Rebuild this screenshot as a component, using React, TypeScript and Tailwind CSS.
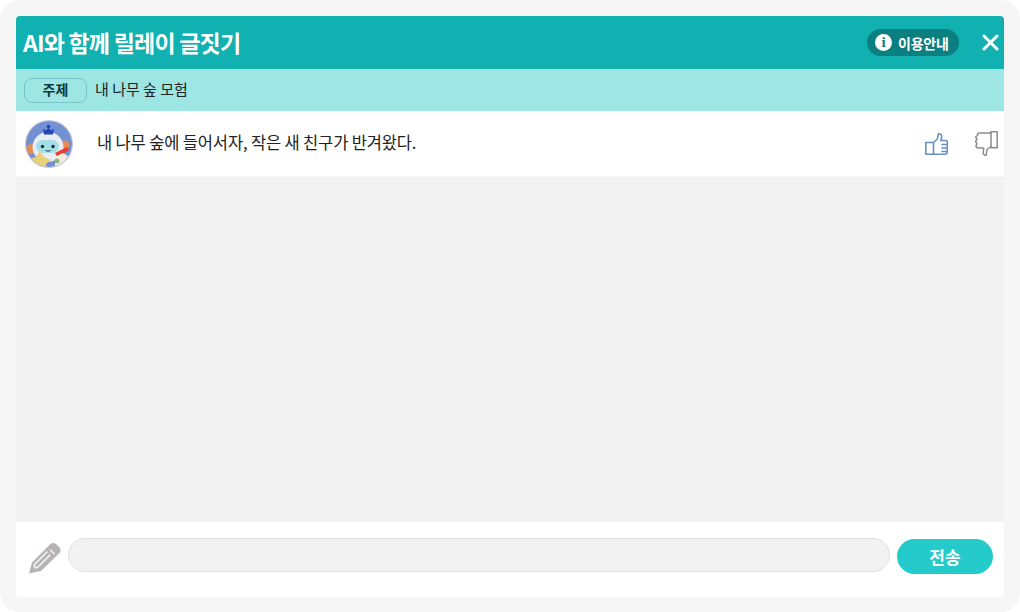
const font = { fontFamily: '"Noto Sans CJK KR", "Noto Sans", sans-serif' };

function Avatar() {
  return (
    <svg width="48" height="48" viewBox="0 0 48 48" className="block shrink-0">
      <defs>
        <clipPath id="av"><circle cx="24" cy="24" r="23" /></clipPath>
      </defs>
      <circle cx="24" cy="24" r="24" fill="#c3c7d0" />
      <g clipPath="url(#av)">
        <circle cx="24" cy="24" r="23" fill="#7390d4" />
        <circle cx="6" cy="29" r="5" fill="#e98a52" />
        <circle cx="40" cy="25" r="4.500" fill="#e98a52" />
        <ellipse cx="23" cy="27" rx="15.500" ry="15" fill="#e9edf2" />
        <rect x="11" y="20" width="23" height="13" rx="6.500" fill="#a5dfe8" />
        <circle cx="17.500" cy="26.500" r="1.700" fill="#1f2a3a" />
        <circle cx="28" cy="26.500" r="1.700" fill="#1f2a3a" />
        <path d="M20.500 30.500q2.500 1.500 5 0" stroke="#1f2a3a" strokeWidth="0.900" fill="none" />
        <rect x="22.500" y="11" width="2" height="3" fill="#2545b5" />
        <path d="M18 8.500l2.500 2 3-2.500 3 2.500 2.500-2-1 6h-9z" fill="#2545b5" />
        <circle cx="23.500" cy="6.500" r="1.800" fill="#2545b5" />
        <path d="M2 39l9-2 4-6 4 6 7 3-5 4 1 6H6l1-7z" fill="#e9cf78" />
        <path d="M30 33l12-6 2.500 3-12 7z" fill="#e5402f" />
        <path d="M30 37l8-4 5 3-4 9-9 2z" fill="#f2eee2" />
        <circle cx="32" cy="41" r="2.500" fill="#8cb77b" />
      </g>
    </svg>
  );
}

function ThumbUp() {
  return (
    <svg width="23" height="22" viewBox="0 0 23 22" className="shrink-0" fill="none" stroke="#6a8fc2" strokeWidth="1.600" strokeLinejoin="round" strokeLinecap="round">
      <path d="M.8 9.500h7.700v11.700H.8z" />
      <path d="M8.500 9.500l3.800-3.500L13.500.8c2.500-.2 3.500 1.500 3 3.700l-.7 3h5c1.300 0 1.700 1 1.500 2v9c0 1.800-.8 2.700-2.300 2.700H8.500" />
      <path d="M17 11.500h5M17 15h5M17 18.500h4.500" />
    </svg>
  );
}

function ThumbDown() {
  return (
    <svg width="24" height="25" viewBox="0 0 24 25" className="shrink-0" fill="none" stroke="#8c8c8c" strokeWidth="1.500" strokeLinejoin="round" strokeLinecap="round">
      <path d="M17 .8h6.200v16H17z" />
      <path d="M17 2H5.500C4 2 3.200 3 3.500 4.500L1.500 6l1.500 2.200L1.500 10.500 3 12.700 2 14.500c0 1.500 1 2.500 2.500 2.500h5.300l-.6 4.500c-.2 2 1 3 3 2.500l.8-5.500 4-3" />
    </svg>
  );
}

function Pencil() {
  return (
    <svg width="33" height="32" viewBox="0 0 33 32" className="mt-[5px] shrink-0">
      <path d="M0 31.500l3-11L21.500 2c1.500-1.500 4-1.500 5.500 0l3.500 3.500c1.500 1.500 1.500 4 0 5.500L12 29z" fill="#b7b3b4" />
      <path d="M5.500 22.500L18 10M8.500 25.500L21 13M5.500 22.500c-1 2 1 4 3 3M21.500 8l3.500 3.500" stroke="#f4f4f4" strokeWidth="1.600" fill="none" strokeLinecap="round" />
    </svg>
  );
}

export default function App() {
  return (
    <div className="h-[612px] w-[1020px] overflow-hidden bg-white" style={font}>
      <div className="flex h-full w-full flex-col rounded-[20px] bg-[#f6f6f6] pb-[15px] pl-4 pr-4 pt-4">
        <div className="flex h-[53px] shrink-0 items-center rounded-t-[4px] bg-[#12b1b1] pl-[7px] pr-[5px]">
          <span className="text-[23px] font-bold leading-none tracking-[-0.8px] text-white">AI와 함께 릴레이 글짓기</span>
          <div className="ml-auto flex h-[27px] w-[92px] items-center rounded-full bg-[#0c7f80] pl-[8px]">
            <span className="flex h-[17px] w-[17px] items-center justify-center rounded-full bg-white text-[15px] font-bold leading-none text-[#0c7f80]" style={{ fontFamily: '"Liberation Serif", serif' }}>i</span>
            <span className="ml-[6px] text-[14px] font-bold leading-none tracking-[-0.2px] text-white">이용안내</span>
          </div>
          <svg width="17" height="17" viewBox="0 0 17 17" className="ml-[23px] shrink-0" stroke="#fff" strokeWidth="3" strokeLinecap="round">
            <path d="M2 2l13 13M15 2L2 15" />
          </svg>
        </div>

        <div className="flex h-[42px] shrink-0 items-center bg-[#9de6e4] pl-[8px]">
          <span className="flex h-[25px] w-[63px] items-center justify-center rounded-[8px] border border-[#76c6c5] pb-[2px] text-[14px] font-bold leading-none text-[#0f3838]">주제</span>
          <span className="ml-[8px] pb-[4px] text-[15px] leading-none text-[#222]">내 나무 숲 모험</span>
        </div>

        <div className="flex h-[66px] shrink-0 items-center border-b border-[#f8f8f8] bg-white pl-[9px] pr-[6px]">
          <Avatar />
          <span className="ml-[24px] pb-[2px] text-[16.500px] leading-none tracking-[-0.15px] text-[#222]">내 나무 숲에 들어서자, 작은 새 친구가 반겨왔다.</span>
          <div className="ml-auto flex items-center gap-[26px]">
            <ThumbUp />
            <ThumbDown />
          </div>
        </div>

        <div className="min-h-0 flex-1 bg-[#f2f2f2]" />

        <div className="flex h-[75px] shrink-0 items-center rounded-b-[4px] bg-white pb-[9px] pl-[13px] pr-[11px]">
          <Pencil />
          <div className="ml-[6px] h-[34px] flex-1 rounded-full border border-[#e1e1e1] bg-[#f2f2f2]" />
          <button className="ml-[7px] mt-[3px] flex h-[35px] w-[96px] shrink-0 items-center justify-center rounded-full bg-[#25cbcb] text-[17px] font-bold leading-none tracking-[0.2px] text-white">전송</button>
        </div>
      </div>
    </div>
  );
}
